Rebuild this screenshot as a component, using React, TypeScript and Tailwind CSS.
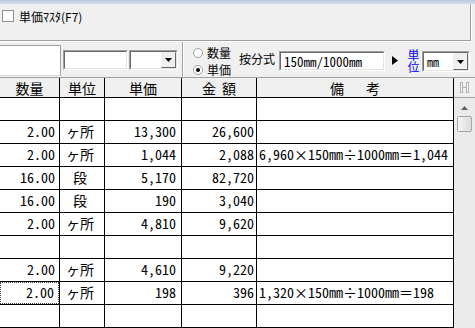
import React from "react";

type Row = { q?: string; u?: string; p?: string; a?: string; r?: string; focus?: boolean };

const rows: Row[] = [
  {},
  { q: "2.00", u: "ヶ所", p: "13,300", a: "26,600" },
  { q: "2.00", u: "ヶ所", p: "1,044", a: "2,088", r: "6,960×150mm÷1000mm＝1,044" },
  { q: "16.00", u: "段", p: "5,170", a: "82,720" },
  { q: "16.00", u: "段", p: "190", a: "3,040" },
  { q: "2.00", u: "ヶ所", p: "4,810", a: "9,620" },
  {},
  { q: "2.00", u: "ヶ所", p: "4,610", a: "9,220" },
  { q: "2.00", u: "ヶ所", p: "198", a: "396", r: "1,320×150mm÷1000mm＝198", focus: true },
  {},
];

function Sunken({ className, children }: { className: string; children?: React.ReactNode }) {
  return (
    <div className={`border border-t-[#a0a0a0] border-l-[#a0a0a0] border-b-white border-r-white ${className}`}>
      <div className="w-full h-full border border-t-[#696969] border-l-[#696969] border-b-[#e3e3e3] border-r-[#e3e3e3] bg-white flex items-center overflow-hidden">
        {children}
      </div>
    </div>
  );
}

function DropBtn() {
  return (
    <div className="w-[15px] h-full border border-t-[#f0f0f0] border-l-[#f0f0f0] border-b-[#696969] border-r-[#696969] bg-[#f0f0f0] flex items-center justify-center">
      <svg width="7" height="4" viewBox="0 0 7 4">
        <polygon points="0,0 7,0 3.5,4" fill="#000" />
      </svg>
    </div>
  );
}

export default function App() {
  const mono = "font-['Noto_Sans_Mono_CJK_JP','Noto_Sans_CJK_JP',monospace]";
  return (
    <div className="w-[475px] h-[328px] overflow-hidden bg-[#f0f0f0] font-['Noto_Sans_CJK_JP',sans-serif] text-black">
      {/* window frame strip */}
      <div className="h-[4px] bg-gradient-to-b from-[#b7c7dc] to-[#d6e0ec]" />

      {/* top panel */}
      <div className="w-[472px] h-[38px] border-r border-b border-white">
        <div className="h-full border-r border-b border-[#a0a0a0] flex items-start pl-[2px] pt-[6px]">
          <div className="w-[12px] h-[12px] border border-[#8e8f8f] bg-white" />
          <span className="ml-[5px] text-[12px] leading-[12px] pt-[1px]">単価ﾏｽﾀ(F7)</span>
        </div>
      </div>

      {/* second row */}
      <div className="h-[35px] flex items-start">
        <div className="mt-[3px] w-[61px] h-[31px] border-t border-r border-b border-t-[#a0a0a0] border-r-[#a0a0a0] border-b-[#d8d8d8] bg-white" />
        <Sunken className="ml-[2px] mt-[8px] w-[65px] h-[20px]" />
        <Sunken className="ml-[1px] mt-[8px] w-[49px] h-[20px]">
          <div className="flex-1" />
          <DropBtn />
        </Sunken>
        <div className="ml-[4px] h-[35px] w-[2px] border-l border-r border-l-[#a0a0a0] border-r-white" />
        <div className="ml-[9px] flex flex-col">
          <div className="flex items-center mt-[4px] h-[13px]">
            <div className="w-[10px] h-[10px] rounded-full border border-[#a0a0a0] bg-white" />
            <span className="ml-[4px] text-[12px] leading-[12px]">数量</span>
          </div>
          <div className="flex items-center mt-[4px] h-[13px]">
            <div className="w-[10px] h-[10px] rounded-full border border-[#a0a0a0] bg-white flex items-center justify-center">
              <div className="w-[4px] h-[4px] rounded-full bg-black" />
            </div>
            <span className="ml-[4px] text-[12px] leading-[12px]">単価</span>
          </div>
        </div>
        <span className="ml-[8px] mt-[11px] text-[12px] leading-[12px]">按分式</span>
        <Sunken className="ml-[4px] mt-[9px] w-[106px] h-[20px]">
          <span className={`${mono} pl-[3px] text-[13px] leading-[13px]`}>150mm/1000mm</span>
        </Sunken>
        <svg className="ml-[7px] mt-[14px]" width="6" height="9" viewBox="0 0 6 9">
          <polygon points="0,0 6,4.5 0,9" fill="#000" />
        </svg>
        <div className="ml-[9px] mt-[7px] w-[12px] h-[24px] text-[12px] leading-[12px] text-[#0000ff] [writing-mode:vertical-rl]">
          単位
        </div>
        <Sunken className="ml-[3px] mt-[9px] w-[48px] h-[21px]">
          <div className={`${mono} pl-[3px] text-[12px] leading-[12px] flex-1 text-black bg-white`}>mm</div>
          <DropBtn />
        </Sunken>
      </div>

      {/* table */}
      <div className="flex border-t border-[#a0a0a0]">
        <div className={`w-[454px] ${mono} text-[14px] leading-[14px]`}>
          <div className="flex h-[20px] border-b border-black bg-[#f0f0f0]">
            <div className="w-[60px] border-r border-black flex items-center justify-center pt-[1px]">数量</div>
            <div className="w-[45px] border-r border-black flex items-center justify-center pt-[1px]">単位</div>
            <div className="w-[77px] border-r border-black flex items-center justify-center pt-[1px]">単価</div>
            <div className="w-[75px] border-r border-black flex items-center justify-center pt-[1px] gap-[6px]">
              <span>金</span>
              <span>額</span>
            </div>
            <div className="w-[197px] border-r border-black flex items-center justify-center pt-[1px] gap-[22px]">
              <span>備</span>
              <span>考</span>
            </div>
          </div>
          {rows.map((r, i) => (
            <div key={i} className="flex h-[23px] border-b border-black bg-white">
              <div className="w-[60px] border-r border-black">
                <div
                  className={`h-full flex items-center justify-end pr-[4px] pb-[3px] ${
                    r.focus ? "border border-dotted border-[#404040] pr-[3px]" : ""
                  }`}
                >
                  {r.q}
                </div>
              </div>
              <div className="w-[45px] border-r border-black flex items-center justify-center pb-[3px] pr-[4px]">{r.u}</div>
              <div className="w-[77px] border-r border-black flex items-center justify-end pr-[5px] pb-[3px]">{r.p}</div>
              <div className="w-[75px] border-r border-black flex items-center justify-end pr-[2px] pb-[3px]">{r.a}</div>
              <div className="w-[197px] border-r border-black flex items-center pl-[2px] pb-[3px] whitespace-nowrap">{r.r}</div>
            </div>
          ))}
        </div>
        {/* scrollbar */}
        <div className="w-[21px] flex flex-col">
          <div className="h-[20px] border-b border-[#a0a0a0] bg-[#f0f0f0] flex items-center justify-center">
            <svg width="9" height="11" viewBox="0 0 9 11">
              <rect x="0.5" y="0.5" width="2" height="10" fill="#fff" stroke="#b0b0b0" />
              <rect x="6.5" y="0.5" width="2" height="10" fill="#fff" stroke="#b0b0b0" />
              <rect x="3" y="5" width="3" height="1" fill="#b0b0b0" />
            </svg>
          </div>
          <div className="flex-1 bg-[#eaeaea] flex flex-col items-center">
            <svg className="mt-[8px]" width="7" height="4" viewBox="0 0 7 4">
              <polygon points="3.5,0 7,4 0,4" fill="#606060" />
            </svg>
            <div className="mt-[6px] w-[15px] h-[16px] rounded-[2px] border border-[#a8a8a8] bg-gradient-to-r from-[#f4f4f4] to-[#dcdcdc]" />
          </div>
        </div>
      </div>
    </div>
  );
}
